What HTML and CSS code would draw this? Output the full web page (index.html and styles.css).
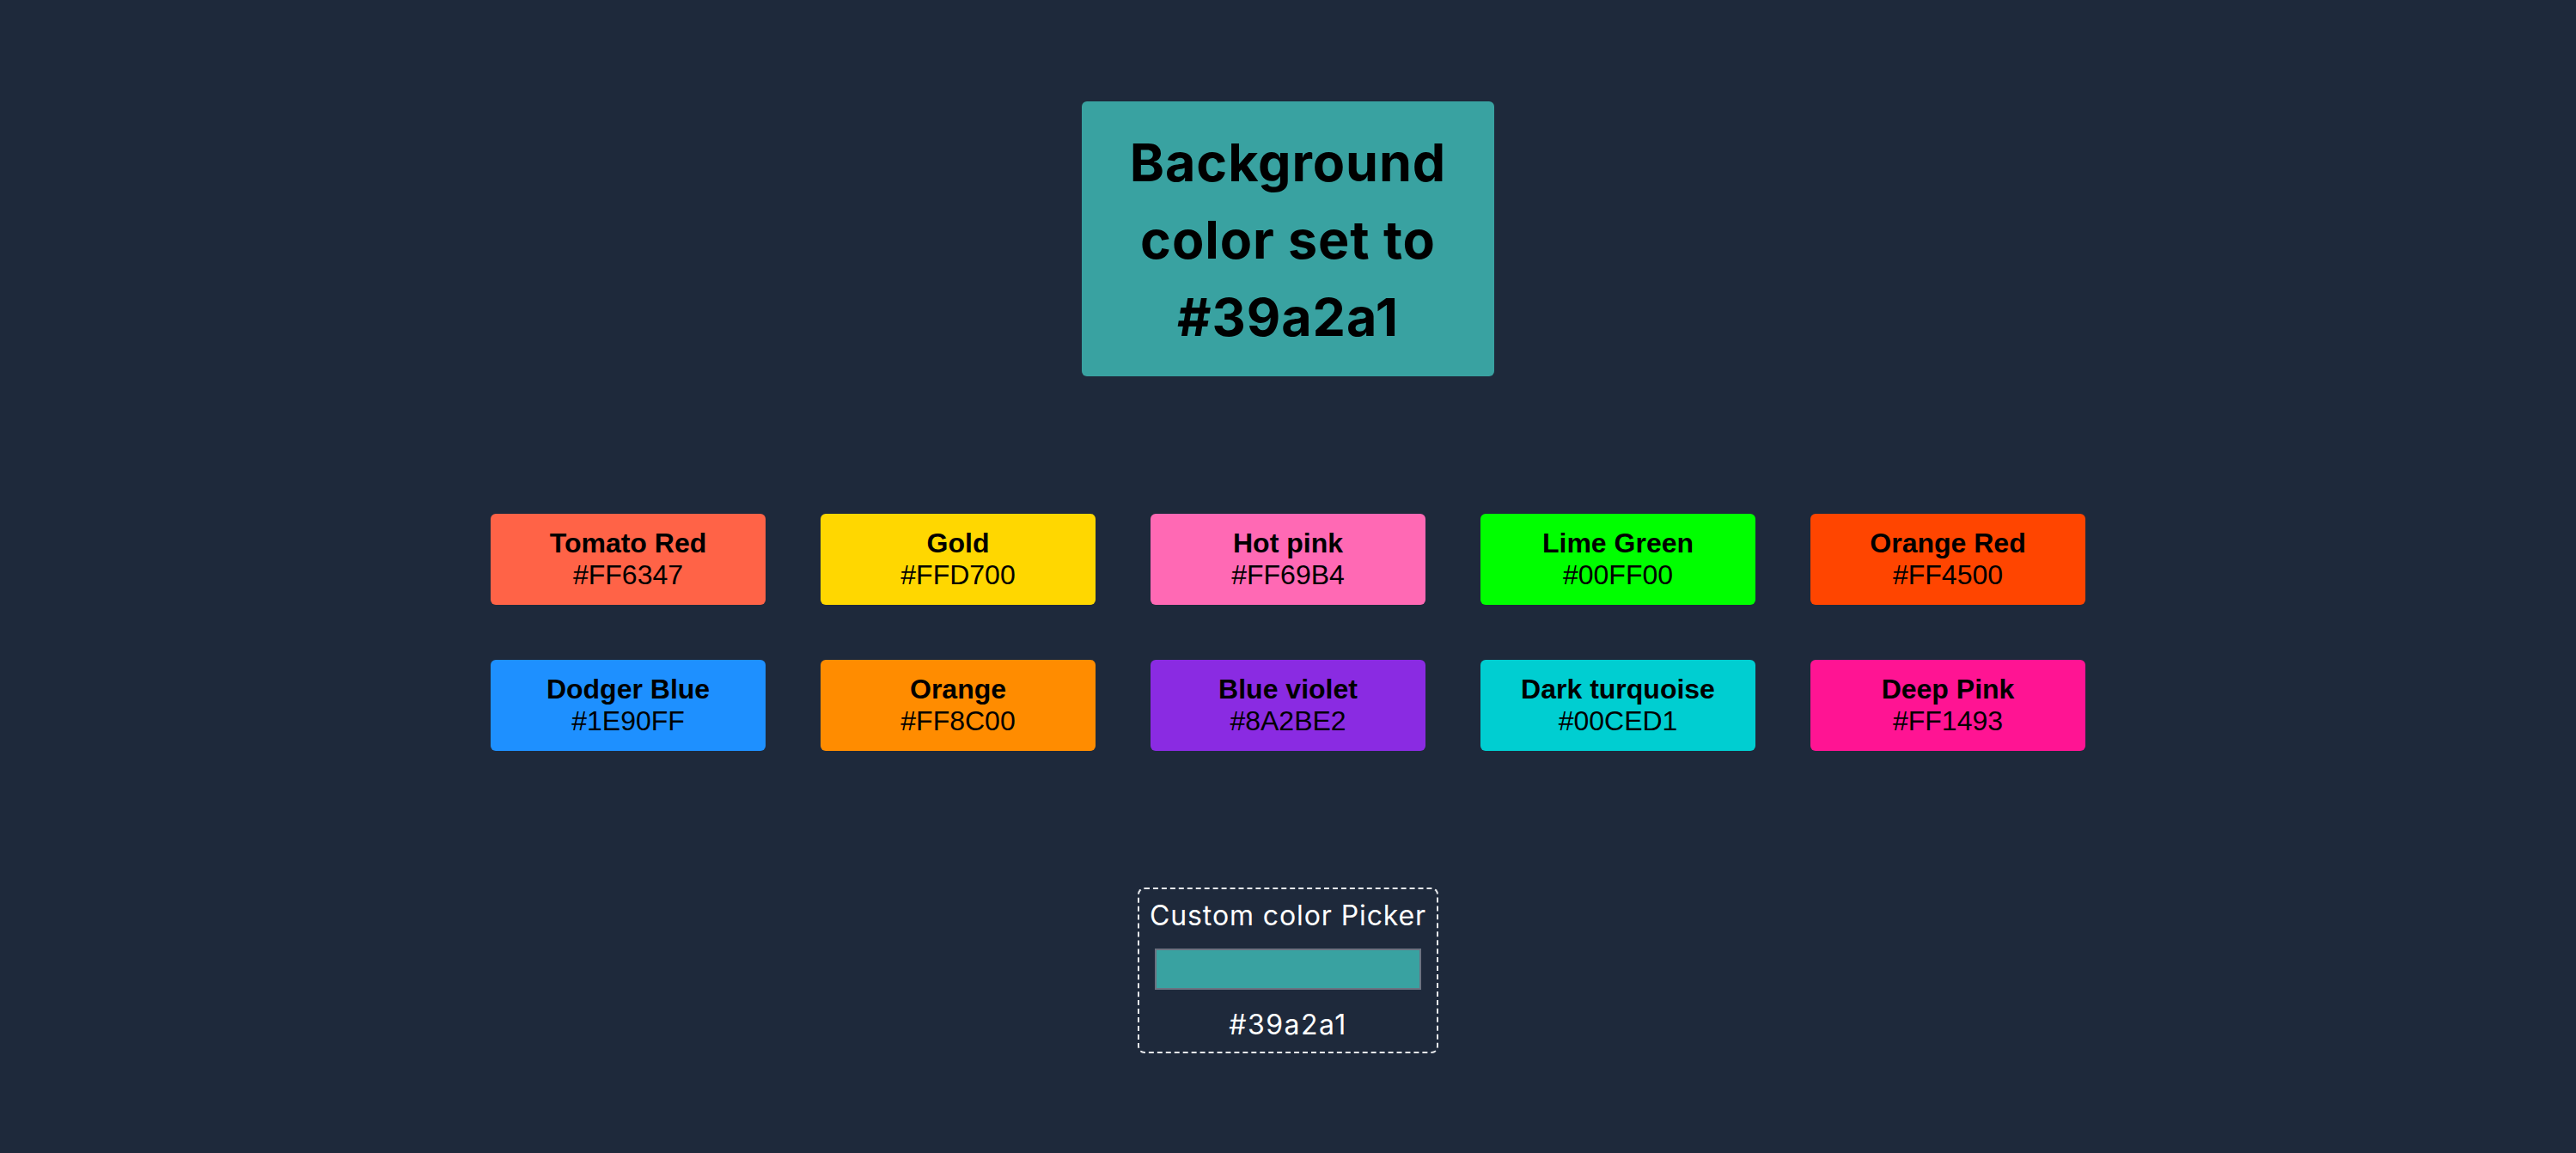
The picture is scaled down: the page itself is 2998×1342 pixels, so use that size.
FILE: index.html
```html
<!DOCTYPE html>
<html lang="en">
<head>
<meta charset="utf-8">
<title>Background Color Changer</title>
<link rel="stylesheet" href="styles.css">
</head>
<body>
<main class="page">
  <h1 class="banner">Background color set to #39a2a1</h1>

  <section class="swatches">
    <button class="swatch tomato"><span class="name">Tomato Red</span><span class="hex">#FF6347</span></button>
    <button class="swatch gold"><span class="name">Gold</span><span class="hex">#FFD700</span></button>
    <button class="swatch hotpink"><span class="name">Hot pink</span><span class="hex">#FF69B4</span></button>
    <button class="swatch lime"><span class="name">Lime Green</span><span class="hex">#00FF00</span></button>
    <button class="swatch orangered"><span class="name">Orange Red</span><span class="hex">#FF4500</span></button>
    <button class="swatch dodger"><span class="name">Dodger Blue</span><span class="hex">#1E90FF</span></button>
    <button class="swatch orange"><span class="name">Orange</span><span class="hex">#FF8C00</span></button>
    <button class="swatch violet"><span class="name">Blue violet</span><span class="hex">#8A2BE2</span></button>
    <button class="swatch turquoise"><span class="name">Dark turquoise</span><span class="hex">#00CED1</span></button>
    <button class="swatch deeppink"><span class="name">Deep Pink</span><span class="hex">#FF1493</span></button>
  </section>

  <section class="picker">
    <label class="picker-title" for="custom">Custom color Picker</label>
    <input id="custom" class="picker-input" type="color" value="#39a2a1">
    <p class="picker-value">#39a2a1</p>
  </section>
</main>
</body>
</html>
```

FILE: styles.css
```css
html, body {
  margin: 0;
  padding: 0;
}

body {
  background: #1e293b;
  width: 2998px;
  height: 1342px;
  overflow: hidden;
}

.page {
  display: flex;
  flex-direction: column;
  align-items: center;
  padding-top: 118px;
}

.banner {
  box-sizing: border-box;
  width: 480px;
  height: 320px;
  margin: 0;
  padding: 26px 40px 24px;
  background: #39a2a1;
  border-radius: 6px;
  color: #000;
  font-family: Inter, "Noto Sans", sans-serif;
  font-weight: 700;
  font-size: 61px;
  line-height: 90px;
  text-align: center;
  letter-spacing: 0.9px;
}

.swatches {
  margin-top: 160px;
  display: grid;
  grid-template-columns: repeat(5, 320px);
  gap: 64px;
}

.swatch {
  box-sizing: border-box;
  height: 106px;
  border: none;
  border-radius: 6px;
  padding: 0;
  display: flex;
  flex-direction: column;
  align-items: center;
  justify-content: center;
  font-family: "Liberation Sans", Arial, sans-serif;
  font-size: 32px;
  line-height: 37px;
  color: #000;
}

.swatch .name {
  font-weight: 700;
}

.tomato { background: #ff6347; }
.gold { background: #ffd700; }
.hotpink { background: #ff69b4; }
.lime { background: #00ff00; }
.orangered { background: #ff4500; }
.dodger { background: #1e90ff; }
.orange { background: #ff8c00; }
.violet { background: #8a2be2; }
.turquoise { background: #00ced1; }
.deeppink { background: #ff1493; }

.picker {
  box-sizing: border-box;
  margin-top: 159px;
  width: 350px;
  height: 193px;
  border: 2px dashed #e5e7eb;
  border-radius: 8px;
  padding: 8px 18px 8px;
  display: flex;
  flex-direction: column;
  align-items: center;
  color: #ffffff;
  font-family: Inter, "Noto Sans", sans-serif;
}

.picker-title {
  font-size: 32px;
  line-height: 45px;
  font-weight: 400;
  letter-spacing: 0.9px;
  white-space: nowrap;
}

.picker-input {
  box-sizing: border-box;
  margin-top: 16px;
  width: 310px;
  height: 48px;
  padding: 0;
  border: 2px solid #6b7280;
  background: #39a2a1;
  -webkit-appearance: none;
  appearance: none;
  cursor: pointer;
}

.picker-input::-webkit-color-swatch-wrapper {
  padding: 0;
}

.picker-input::-webkit-color-swatch {
  border: none;
}

.picker-value {
  margin: 18px 0 0;
  font-size: 32px;
  line-height: 45px;
  letter-spacing: 1.5px;
}
```
